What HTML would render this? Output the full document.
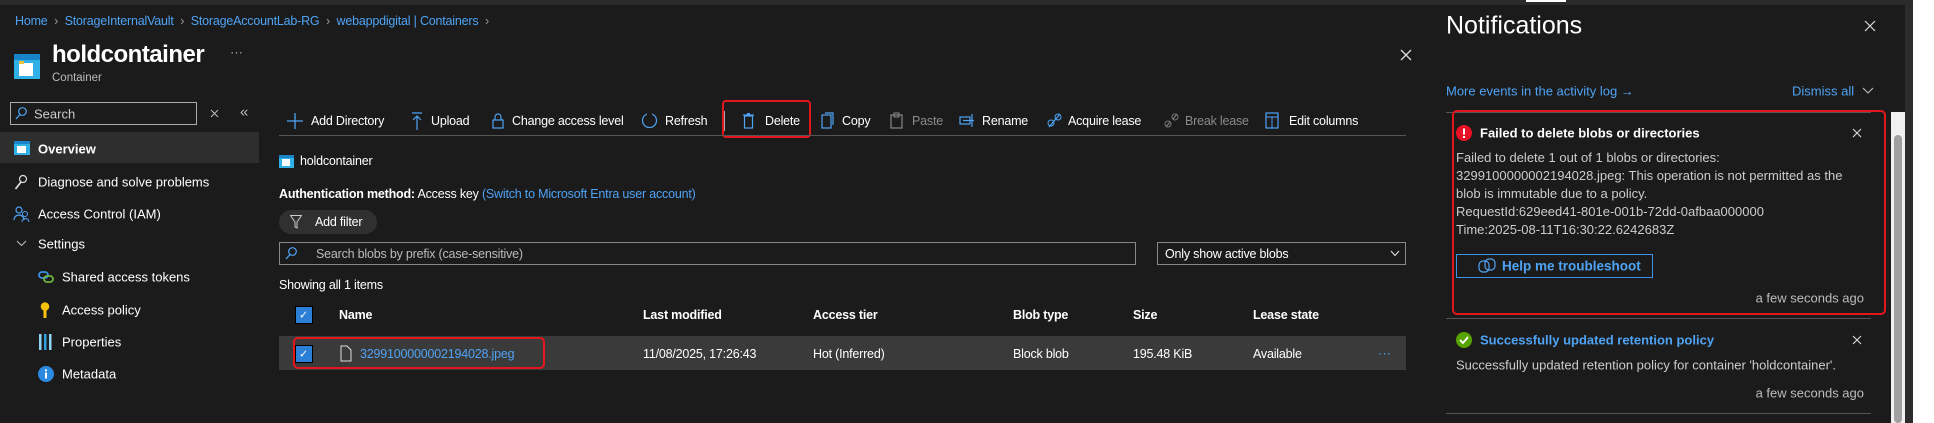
<!DOCTYPE html>
<html><head><style>
*{margin:0;padding:0;box-sizing:border-box}
body{width:1934px;height:423px;background:#1b1b1b;color:#fff;font-family:"Liberation Sans",sans-serif;font-size:13px;position:relative;overflow:hidden}
.a{position:absolute;white-space:nowrap}
.c{transform:translateY(-50%)}
.b{color:#4fa3f5}
.g{color:#8a8a8a}
.s{font-size:12.5px;letter-spacing:-0.2px}
svg{position:absolute}
</style></head><body>
<div class="a" style="left:0;top:0;width:1934px;height:5px;background:#2a2a2a"></div>
<div class="a c b s" style="left:15px;top:21px">Home &nbsp;<span style="color:#999">›</span>&nbsp; StorageInternalVault &nbsp;<span style="color:#999">›</span>&nbsp; StorageAccountLab-RG &nbsp;<span style="color:#999">›</span>&nbsp; webappdigital | Containers &nbsp;<span style="color:#999">›</span></div>
<svg style="left:14px;top:54px" width="26" height="25"><rect x="0" y="4" width="26" height="21" fill="#2fb0e6"/><rect x="0" y="0" width="26" height="6" fill="#1883c9"/><rect x="5" y="9" width="14" height="13" fill="#fff"/><rect x="5" y="7" width="5" height="3" fill="#f0c040"/></svg>
<div class="a c" style="left:52px;top:55px;font-size:24px;font-weight:bold;letter-spacing:-0.5px">holdcontainer</div>
<div class="a c" style="left:230px;top:52px;color:#aaa">···</div>
<div class="a c" style="left:52px;top:78px;font-size:11.5px;color:#bbb">Container</div>
<svg style="left:1400px;top:49px" width="12" height="12"><path d="M1 1L11 11M11 1L1 11" stroke="#ddd" stroke-width="1.3"/></svg>
<div class="a" style="left:10px;top:102px;width:187px;height:23px;border:1px solid #aaa"></div>
<svg style="left:15px;top:107px" width="12" height="13"><circle cx="7.5" cy="4.5" r="3.8" fill="none" stroke="#4fa3f5" stroke-width="1.2"/><line x1="5" y1="7.5" x2="1" y2="12" stroke="#4fa3f5" stroke-width="1.3"/></svg>
<div class="a c" style="left:34px;top:114px;color:#ccc">Search</div>
<svg style="left:210px;top:109px" width="9" height="9"><path d="M1 1L8 8M8 1L1 8" stroke="#bbb" stroke-width="1"/></svg>
<div class="a c" style="left:240px;top:112px;color:#bbb;font-size:15px">«</div>
<div class="a" style="left:0;top:132px;width:259px;height:31px;background:#2e2e2e"></div>
<svg style="left:14px;top:141px" width="16" height="14"><rect width="16" height="14" fill="#2fb0e6"/><rect width="16" height="3" fill="#1883c9"/><rect x="3" y="5" width="9" height="7" fill="#fff"/></svg>
<div class="a c" style="left:38px;top:149px;font-weight:bold">Overview</div>
<svg style="left:14px;top:174px" width="14" height="16"><circle cx="9" cy="5" r="3.5" fill="none" stroke="#ddd" stroke-width="1.2"/><path d="M7 8L1.5 15" stroke="#ddd" stroke-width="1.8"/></svg>
<div class="a c" style="left:38px;top:182px">Diagnose and solve problems</div>
<svg style="left:13px;top:206px" width="17" height="16"><circle cx="6" cy="4" r="3" fill="none" stroke="#4fa3f5" stroke-width="1.2"/><path d="M1 14a5 5 0 0 1 10 0" fill="none" stroke="#4fa3f5" stroke-width="1.2"/><circle cx="12" cy="8" r="2.5" fill="none" stroke="#4fa3f5"/><path d="M9 16a3 3 0 0 1 7 0" fill="none" stroke="#4fa3f5"/></svg>
<div class="a c" style="left:38px;top:214px">Access Control (IAM)</div>
<svg style="left:16px;top:240px" width="11" height="7"><path d="M1 1l4.5 4.5L10 1" fill="none" stroke="#bbb" stroke-width="1.1"/></svg>
<div class="a c" style="left:38px;top:244px">Settings</div>
<svg style="left:38px;top:271px" width="17" height="12"><rect x="1" y="1" width="9" height="6" rx="3" fill="none" stroke="#3b8fe0" stroke-width="1.8"/><rect x="6" y="5" width="9" height="6" rx="3" fill="none" stroke="#6cb33f" stroke-width="1.8"/></svg>
<div class="a c" style="left:62px;top:277px">Shared access tokens</div>
<svg style="left:40px;top:302px" width="10" height="16"><circle cx="5" cy="4.5" r="4.3" fill="#f4c20d"/><rect x="3.5" y="7" width="3" height="9" fill="#f4c20d"/></svg>
<div class="a c" style="left:62px;top:310px">Access policy</div>
<svg style="left:38px;top:334px" width="15" height="16"><rect x="1" y="0" width="2.5" height="16" fill="#8fd4f5"/><rect x="6" y="0" width="2.5" height="16" fill="#2fa0e0"/><rect x="11" y="0" width="2.5" height="16" fill="#8fd4f5"/></svg>
<div class="a c" style="left:62px;top:342px">Properties</div>
<svg style="left:38px;top:366px" width="16" height="16"><circle cx="8" cy="8" r="8" fill="#2a8ae0"/><rect x="7" y="6.5" width="2" height="6" fill="#fff"/><circle cx="8" cy="4.3" r="1.1" fill="#fff"/></svg>
<div class="a c" style="left:62px;top:374px">Metadata</div>
<!-- toolbar -->
<svg style="left:287px;top:113px" width="16" height="16"><path d="M8 0v16M0 8h16" stroke="#4fa3f5" stroke-width="1.3"/></svg>
<div class="a c s" style="left:311px;top:121px">Add Directory</div>
<svg style="left:412px;top:112px" width="10" height="18"><path d="M0 1h10M5 4v14M1 8l4-4 4 4" fill="none" stroke="#4fa3f5" stroke-width="1.2"/></svg>
<div class="a c s" style="left:431px;top:121px">Upload</div>
<svg style="left:492px;top:112px" width="12" height="17"><path d="M3 8V5a3 3 0 0 1 6 0v3" fill="none" stroke="#4fa3f5" stroke-width="1.2"/><rect x="1" y="8" width="10" height="8" fill="none" stroke="#4fa3f5" stroke-width="1.2"/></svg>
<div class="a c s" style="left:512px;top:121px">Change access level</div>
<svg style="left:642px;top:112px" width="16" height="18"><path d="M10 2a7 7 0 1 1-5 0" fill="none" stroke="#4fa3f5" stroke-width="1.2"/></svg>
<div class="a c s" style="left:665px;top:121px">Refresh</div>
<div class="a" style="left:724px;top:111px;width:1px;height:20px;background:#aaa"></div>
<div class="a" style="left:722px;top:100px;width:89px;height:38px;border:2px solid #e3161c;border-radius:4px"></div>
<svg style="left:743px;top:112px" width="11" height="17"><rect x="1.5" y="4" width="8" height="12" fill="none" stroke="#4fa3f5" stroke-width="1.2"/><line x1="0" y1="3" x2="11" y2="3" stroke="#4fa3f5" stroke-width="1.2"/><rect x="4" y="1" width="3" height="2" fill="#4fa3f5"/></svg>
<div class="a c s" style="left:765px;top:121px">Delete</div>
<svg style="left:821px;top:112px" width="14" height="17"><rect x="1" y="3" width="9" height="13" fill="none" stroke="#4fa3f5" stroke-width="1.2"/><path d="M4 1h8v12" fill="none" stroke="#4fa3f5" stroke-width="1.2"/></svg>
<div class="a c s" style="left:842px;top:121px">Copy</div>
<svg style="left:890px;top:112px" width="13" height="17"><rect x="1" y="3" width="11" height="13" fill="none" stroke="#888" stroke-width="1.2"/><rect x="4" y="1" width="5" height="4" fill="none" stroke="#888"/></svg>
<div class="a c s g" style="left:912px;top:121px">Paste</div>
<svg style="left:959px;top:113px" width="17" height="15"><rect x="1" y="4" width="10" height="7" fill="none" stroke="#4fa3f5" stroke-width="1.2"/><line x1="13" y1="1" x2="13" y2="14" stroke="#4fa3f5" stroke-width="1.2"/><line x1="4" y1="7.5" x2="15" y2="7.5" stroke="#4fa3f5" stroke-width="1.2"/></svg>
<div class="a c s" style="left:982px;top:121px">Rename</div>
<svg style="left:1047px;top:112px" width="15" height="17"><path d="M2 15l11-13" stroke="#4fa3f5" stroke-width="1.3"/><circle cx="4" cy="11" r="3" fill="none" stroke="#4fa3f5"/><circle cx="11" cy="5" r="3" fill="none" stroke="#4fa3f5"/></svg>
<div class="a c s" style="left:1068px;top:121px">Acquire lease</div>
<svg style="left:1164px;top:112px" width="15" height="17"><path d="M2 15l4-5M9 7l4-5" stroke="#777" stroke-width="1.3"/><circle cx="4" cy="12" r="3" fill="none" stroke="#777"/><circle cx="11" cy="5" r="3" fill="none" stroke="#777"/></svg>
<div class="a c s g" style="left:1185px;top:121px">Break lease</div>
<svg style="left:1265px;top:112px" width="17" height="17"><rect x="1" y="1" width="12" height="15" fill="none" stroke="#4fa3f5" stroke-width="1.2"/><line x1="1" y1="5" x2="13" y2="5" stroke="#4fa3f5"/><line x1="7" y1="5" x2="7" y2="16" stroke="#4fa3f5"/></svg>
<div class="a c s" style="left:1289px;top:121px">Edit columns</div>
<div class="a" style="left:279px;top:135px;width:1127px;height:1px;background:#555"></div>
<!-- content -->
<svg style="left:279px;top:155px" width="15" height="13"><rect width="15" height="13" fill="#2fb0e6"/><rect width="15" height="3" fill="#1883c9"/><rect x="3" y="4" width="8" height="7" fill="#fff"/></svg>
<div class="a c s" style="left:300px;top:161px">holdcontainer</div>
<div class="a c s" style="left:279px;top:194px"><b>Authentication method:</b> Access key <span class="b">(Switch to Microsoft Entra user account)</span></div>
<div class="a" style="left:279px;top:210px;width:98px;height:24px;background:#303030;border-radius:12px"></div>
<svg style="left:290px;top:215px" width="12" height="14"><path d="M0.5 0.5h11L7 7v6l-2-1V7z" fill="none" stroke="#ccc"/></svg>
<div class="a c s" style="left:315px;top:222px">Add filter</div>
<div class="a" style="left:279px;top:242px;width:857px;height:23px;border:1px solid #888"></div>
<svg style="left:285px;top:247px" width="12" height="13"><circle cx="7.5" cy="4.5" r="3.8" fill="none" stroke="#4fa3f5" stroke-width="1.2"/><line x1="5" y1="7.5" x2="1" y2="12" stroke="#4fa3f5" stroke-width="1.3"/></svg>
<div class="a c s" style="left:316px;top:254px;color:#bbb">Search blobs by prefix (case-sensitive)</div>
<div class="a" style="left:1157px;top:242px;width:249px;height:23px;border:1px solid #888"></div>
<div class="a c s" style="left:1165px;top:254px">Only show active blobs</div>
<svg style="left:1390px;top:250px" width="10" height="7"><path d="M1 1l4 4.5L9 1" fill="none" stroke="#ddd" stroke-width="1.1"/></svg>
<div class="a c s" style="left:279px;top:285px">Showing all 1 items</div>
<div class="a" style="left:295px;top:306px;width:18px;height:18px;background:#2b7fd6;border:1px solid #000"></div>
<div class="a c" style="left:299px;top:315px;font-size:11px">✓</div>
<div class="a c s" style="left:339px;top:315px;font-weight:bold">Name</div>
<div class="a c s" style="left:643px;top:315px;font-weight:bold">Last modified</div>
<div class="a c s" style="left:813px;top:315px;font-weight:bold">Access tier</div>
<div class="a c s" style="left:1013px;top:315px;font-weight:bold">Blob type</div>
<div class="a c s" style="left:1133px;top:315px;font-weight:bold">Size</div>
<div class="a c s" style="left:1253px;top:315px;font-weight:bold">Lease state</div>
<div class="a" style="left:279px;top:336px;width:1127px;height:34px;background:#3a3a3a"></div>
<div class="a" style="left:293px;top:337px;width:252px;height:32px;border:2px solid #e3161c;border-radius:5px"></div>
<div class="a" style="left:295px;top:345px;width:18px;height:18px;background:#2b7fd6;border:1px solid #000"></div>
<div class="a c" style="left:299px;top:354px;font-size:11px">✓</div>
<svg style="left:340px;top:345px" width="12" height="17"><path d="M1 1h6l4 4v11H1z" fill="none" stroke="#ddd" stroke-width="1"/></svg>
<div class="a c s b" style="left:360px;top:354px">3299100000002194028.jpeg</div>
<div class="a c s" style="left:643px;top:354px">11/08/2025, 17:26:43</div>
<div class="a c s" style="left:813px;top:354px">Hot (Inferred)</div>
<div class="a c s" style="left:1013px;top:354px">Block blob</div>
<div class="a c s" style="left:1133px;top:354px">195.48 KiB</div>
<div class="a c s" style="left:1253px;top:354px">Available</div>
<div class="a c b" style="left:1378px;top:353px">···</div>
<!-- notifications panel -->
<div class="a" style="left:1526px;top:0;width:40px;height:2px;background:#fff"></div>
<div class="a c" style="left:1446px;top:26px;font-size:25px">Notifications</div>
<svg style="left:1864px;top:20px" width="12" height="12"><path d="M1 1L11 11M11 1L1 11" stroke="#ddd" stroke-width="1.2"/></svg>
<div class="a c b" style="left:1446px;top:91px">More events in the activity log →</div>
<div class="a c b" style="left:1792px;top:91px">Dismiss all</div>
<svg style="left:1862px;top:87px" width="12" height="7"><path d="M1 1l5 5 5-5" fill="none" stroke="#bbb" stroke-width="1.1"/></svg>
<div class="a" style="left:1446px;top:112px;width:425px;height:1px;background:#555"></div>
<div class="a" style="left:1452px;top:110px;width:434px;height:205px;border:2px solid #e3161c;border-radius:5px"></div>
<svg style="left:1456px;top:125px" width="16" height="16"><circle cx="8" cy="8" r="8" fill="#e81123"/><rect x="7" y="3.5" width="2" height="6" fill="#fff"/><rect x="7" y="11" width="2" height="2" fill="#fff"/></svg>
<div class="a c" style="left:1480px;top:133px;font-weight:bold">Failed to delete blobs or directories</div>
<svg style="left:1852px;top:128px" width="10" height="10"><path d="M1 1L9 9M9 1L1 9" stroke="#ddd" stroke-width="1.1"/></svg>
<div class="a" style="left:1456px;top:149px;line-height:18px;color:#ccc;font-size:13px;white-space:normal;width:420px">Failed to delete 1 out of 1 blobs or directories:<br>3299100000002194028.jpeg: This operation is not permitted as the<br>blob is immutable due to a policy.<br>RequestId:629eed41-801e-001b-72dd-0afbaa000000<br>Time:2025-08-11T16:30:22.6242683Z</div>
<div class="a" style="left:1456px;top:254px;width:197px;height:24px;border:1px solid #3d93ea"></div>
<svg style="left:1478px;top:258px" width="18" height="16"><rect x="1" y="3" width="10" height="11" rx="4" fill="none" stroke="#4fa3f5" stroke-width="1.2"/><rect x="7" y="1" width="10" height="11" rx="4" fill="none" stroke="#4fa3f5" stroke-width="1.2"/></svg>
<div class="a c b" style="left:1502px;top:266px;font-weight:bold;font-size:13.5px">Help me troubleshoot</div>
<div class="a c" style="right:70px;top:298px;color:#bbb">a few seconds ago</div>
<div class="a" style="left:1446px;top:318px;width:425px;height:1px;background:#555"></div>
<svg style="left:1456px;top:332px" width="16" height="16"><circle cx="8" cy="8" r="8" fill="#57a300"/><path d="M4 8l3 3 5-6" fill="none" stroke="#fff" stroke-width="1.8"/></svg>
<div class="a c b" style="left:1480px;top:340px;font-weight:bold">Successfully updated retention policy</div>
<svg style="left:1852px;top:335px" width="10" height="10"><path d="M1 1L9 9M9 1L1 9" stroke="#ddd" stroke-width="1.1"/></svg>
<div class="a c" style="left:1456px;top:365px;color:#ccc;font-size:13px">Successfully updated retention policy for container 'holdcontainer'.</div>
<div class="a c" style="right:70px;top:393px;color:#bbb">a few seconds ago</div>
<div class="a" style="left:1446px;top:413px;width:425px;height:1px;background:#555"></div>
<div class="a" style="left:1891px;top:112px;width:14px;height:311px;background:#f0f0f0"></div>
<div class="a" style="left:1894px;top:135px;width:8px;height:288px;background:#a0a0a0;border-radius:4px"></div>
<div class="a" style="left:1905px;top:0;width:8px;height:423px;background:#2c2c2c"></div>
<div class="a" style="left:1913px;top:0;width:21px;height:423px;background:#fff"></div>
</body></html>
